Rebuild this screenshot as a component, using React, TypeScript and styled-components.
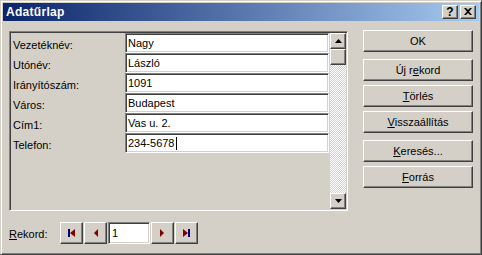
import React from "react";
import styled, { createGlobalStyle } from "styled-components";

const GlobalStyle = createGlobalStyle`
  * { box-sizing: border-box; }
  body {
    margin: 0;
    background: #d4d0c8;
    font-family: "Liberation Sans", Arial, sans-serif;
    font-size: 11px;
    color: #000;
  }
`;

const fields = [
  { label: "Vezetéknév:", value: "Nagy" },
  { label: "Utónév:", value: "László" },
  { label: "Irányítószám:", value: "1091" },
  { label: "Város:", value: "Budapest" },
  { label: "Cím1:", value: "Vas u. 2." },
  { label: "Telefon:", value: "234-5678", focused: true },
];

const actions = [
  { pre: "", key: "OK", post: "", spaced: true, plain: true },
  { pre: "Új r", key: "e", post: "kord" },
  { pre: "", key: "T", post: "örlés" },
  { pre: "", key: "V", post: "isszaállítás", spaced: true },
  { pre: "", key: "K", post: "eresés..." },
  { pre: "", key: "F", post: "orrás" },
];

const BLUE = "#000080";
const RED = "#800000";

function App() {
  return (
    <>
      <GlobalStyle />
      <Window>
        <TitleBar>
          <Title>Adatűrlap</Title>
          <CaptionButtons>
            <CaptionButton>?</CaptionButton>
            <CaptionButton>
              <svg width="8" height="7" viewBox="0 0 8 7">
                <path d="M0 0h2l2 2 2-2h2L5 3.5 8 7H6L4 5 2 7H0l3-3.5z" fill="#000" />
              </svg>
            </CaptionButton>
          </CaptionButtons>
        </TitleBar>
        <Body>
          <Top>
            <Panel>
              <Rows>
                {fields.map((f) => (
                  <Row key={f.label}>
                    <FieldLabel>{f.label}</FieldLabel>
                    <Field>
                      {f.value}
                      {f.focused && <Caret />}
                    </Field>
                  </Row>
                ))}
              </Rows>
              <ScrollBar>
                <ScrollButton>
                  <svg width="7" height="4" viewBox="0 0 7 4">
                    <path d="M3.5 0L7 4H0z" fill="#000" />
                  </svg>
                </ScrollButton>
                <ScrollButton />
                <Track />
                <ScrollButton>
                  <svg width="7" height="4" viewBox="0 0 7 4">
                    <path d="M0 0h7L3.5 4z" fill="#000" />
                  </svg>
                </ScrollButton>
              </ScrollBar>
            </Panel>
            <ButtonColumn>
              {actions.map((a) => (
                <ActionButton key={a.pre + a.key} $spaced={a.spaced}>
                  {a.pre}
                  {a.plain ? a.key : <u>{a.key}</u>}
                  {a.post}
                </ActionButton>
              ))}
            </ButtonColumn>
          </Top>
          <NavRow>
            <NavLabel>
              <u>R</u>ekord:
            </NavLabel>
            <NavButton>
              <svg width="7" height="8" viewBox="0 0 7 8">
                <rect x="0" y="0" width="2" height="8" fill={BLUE} />
                <path d="M7 0v8L2 4z" fill={RED} />
              </svg>
            </NavButton>
            <NavButton>
              <svg width="5" height="8" viewBox="0 0 5 8">
                <path d="M5 0v8L1 4z" fill={RED} />
              </svg>
            </NavButton>
            <RecordBox>1</RecordBox>
            <NavButton>
              <svg width="5" height="8" viewBox="0 0 5 8">
                <path d="M0 0v8l4-4z" fill={RED} />
              </svg>
            </NavButton>
            <NavButton>
              <svg width="7" height="8" viewBox="0 0 7 8">
                <path d="M0 0v8l5-4z" fill={RED} />
                <rect x="5" y="0" width="2" height="8" fill={BLUE} />
              </svg>
            </NavButton>
          </NavRow>
        </Body>
      </Window>
    </>
  );
}

const raised = `
  border: 1px solid;
  border-color: #ffffff #404040 #404040 #ffffff;
  box-shadow: inset -1px -1px #808080, inset 1px 1px #d4d0c8;
  background: #d4d0c8;
`;

const sunken = `
  border: 1px solid;
  border-color: #808080 #ffffff #ffffff #808080;
  box-shadow: inset 1px 1px #404040, inset -1px -1px #d4d0c8;
`;

const Window = styled.div`
  width: 482px;
  height: 255px;
  border: 1px solid;
  border-color: #d4d0c8 #404040 #404040 #d4d0c8;
  box-shadow: inset 1px 1px #ffffff, inset -1px -1px #808080;
  padding: 2px;
  display: flex;
  flex-direction: column;
`;

const TitleBar = styled.div`
  height: 18px;
  display: flex;
  align-items: center;
  justify-content: space-between;
  padding: 0 3px 0 3px;
  background: linear-gradient(to right, #0a246a, #a6caf0);
`;

const Title = styled.span`
  color: #fff;
  font-weight: bold;
  font-size: 12px;
  letter-spacing: 0.3px;
`;

const CaptionButtons = styled.div`
  display: flex;
  gap: 2px;
`;

const CaptionButton = styled.div`
  ${raised}
  width: 16px;
  height: 14px;
  display: flex;
  align-items: center;
  justify-content: center;
  font-weight: bold;
  font-size: 12px;
  line-height: 1;
  padding-bottom: 1px;
`;

const Body = styled.div`
  flex: 1;
  padding: 9px 5px 0 6px;
  display: flex;
  flex-direction: column;
`;

const Top = styled.div`
  display: flex;
  gap: 15px;
`;

const Panel = styled.div`
  ${sunken}
  margin-top: 1px;
  width: 339px;
  height: 180px;
  padding: 1px;
  display: flex;
  align-items: stretch;
`;

const Rows = styled.div`
  flex: 1;
  display: flex;
  flex-direction: column;
`;

const Row = styled.div`
  display: flex;
  height: 20px;
  align-items: center;
`;

const FieldLabel = styled.span`
  width: 114px;
  padding: 3px 0 0 2px;
  white-space: nowrap;
`;

const Field = styled.div`
  ${sunken}
  width: 204px;
  height: 20px;
  background: #fff;
  display: flex;
  align-items: center;
  padding: 0 2px;
  white-space: nowrap;
`;

const Caret = styled.span`
  display: inline-block;
  width: 1px;
  height: 13px;
  background: #000;
  margin-left: 1px;
`;

const ScrollBar = styled.div`
  width: 16px;
  margin-left: 1px;
  display: flex;
  flex-direction: column;
`;

const ScrollButton = styled.div`
  ${raised}
  width: 16px;
  height: 16px;
  display: flex;
  align-items: center;
  justify-content: center;
  flex: none;
`;

const Track = styled.div`
  flex: 1;
  background: repeating-conic-gradient(#ffffff 0 25%, #d4d0c8 0 50%) 0 0 / 2px 2px;
`;

const ButtonColumn = styled.div`
  width: 110px;
  display: flex;
  flex-direction: column;
  gap: 4px;
`;

const ActionButton = styled.div<{ $spaced?: boolean }>`
  ${raised}
  height: 22px;
  display: flex;
  align-items: center;
  justify-content: center;
  margin-bottom: ${({ $spaced }) => ($spaced ? "3px" : "0")};
  white-space: nowrap;
`;

const NavRow = styled.div`
  display: flex;
  align-items: center;
  margin-top: 11px;
`;

const NavLabel = styled.span`
  width: 51px;
  padding-top: 2px;
`;

const NavButton = styled.div`
  ${raised}
  width: 23px;
  height: 22px;
  display: flex;
  align-items: center;
  justify-content: center;
  margin-right: 1px;
`;

const RecordBox = styled.div`
  ${sunken}
  width: 42px;
  height: 22px;
  background: #fff;
  display: flex;
  align-items: center;
  padding: 0 3px;
  margin-right: 1px;
`;

export default App;
